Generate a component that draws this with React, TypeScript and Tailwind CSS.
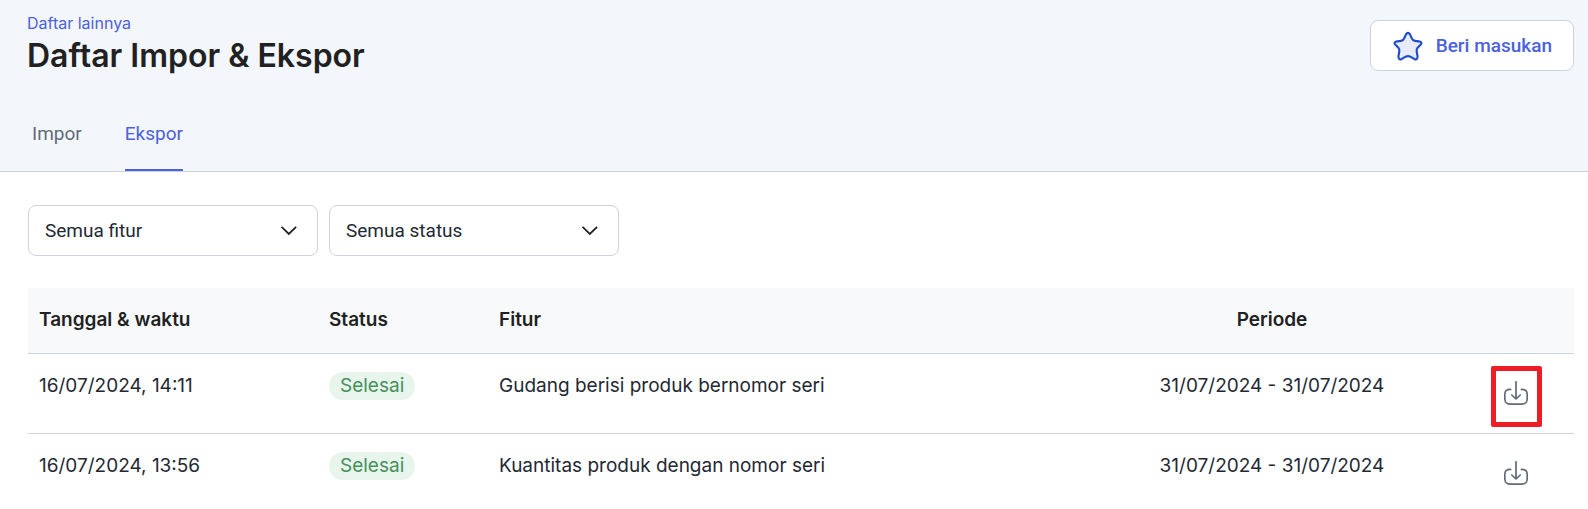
import type { ReactNode } from "react";

interface ExportRow {
  date: string;
  status: string;
  feature: string;
  period: string;
  highlighted?: boolean;
}

const rows: ExportRow[] = [
  {
    date: "16/07/2024, 14:11",
    status: "Selesai",
    feature: "Gudang berisi produk bernomor seri",
    period: "31/07/2024 - 31/07/2024",
    highlighted: true,
  },
  {
    date: "16/07/2024, 13:56",
    status: "Selesai",
    feature: "Kuantitas produk dengan nomor seri",
    period: "31/07/2024 - 31/07/2024",
  },
];

function StarIcon() {
  return (
    <svg className="size-8" viewBox="-.6 -.4 33.2 33.2" fill="#e8ebfa" stroke="#1f4bc6" strokeWidth="2.2" strokeLinejoin="round" aria-hidden>
      <path d="M13.8 4.4Q16 .8 18.2 4.4L20.2 8.6Q21 10.6 23.2 10.9L27.2 11.4Q31.8 12.2 28.8 15.2L26 18Q24.6 19.6 25 21.6L25.9 27Q26.1 31.2 22.4 29.6L18.4 27.3Q16 26.1 13.6 27.3L9.6 29.6Q5.9 31.2 6.1 27L7 21.6Q7.4 19.6 6 18L3.2 15.2Q.2 12.2 4.8 11.4L8.8 10.9Q11 10.6 11.8 8.6Z" />
    </svg>
  );
}

function ChevronIcon() {
  return (
    <svg
      className="pointer-events-none absolute top-1/2 right-[21px] h-4 w-4 -translate-y-1/2"
      viewBox="0 0 16 16"
      fill="none"
      stroke="#212121"
      strokeWidth="1.8"
      aria-hidden
    >
      <path d="M.5 3.8 7.8 11l7.3-7.2" />
    </svg>
  );
}

function DownloadIcon() {
  return (
    <svg
      className="size-6"
      viewBox="0 0 24 24"
      fill="none"
      stroke="#626b79"
      strokeWidth="1.7"
      strokeLinecap="round"
      strokeLinejoin="round"
      aria-hidden
    >
      <path d="M12 .8v17M7.8 14l4.2 4 4.2-4" />
      <path d="M6.6 8.4C2.2 8.4.8 9.8.8 14v3.2C.8 21.8 2.4 23.2 7 23.2h10c4.6 0 6.2-1.4 6.2-6V14c0-4.2-1.4-5.6-5.8-5.6" />
    </svg>
  );
}

function Filter({ id, label, children }: { id: string; label: string; children: ReactNode }) {
  return (
    <div className="relative w-[290px]">
      <select
        id={id}
        aria-label={label}
        className="h-[51px] w-full appearance-none rounded-lg border border-[#cdd2de] bg-white px-4 font-['Roboto',sans-serif] text-[19px] text-[#232933]"
      >
        {children}
      </select>
      <ChevronIcon />
    </div>
  );
}

export default function App() {
  return (
    <div className="bg-white font-['Inter',sans-serif] text-[19px] leading-7 text-[#232933]">
      <header className="border-b border-[#cdd2de] bg-[#f3f6fb] pr-3.5 pl-[27px]">
        <div className="flex items-start justify-between">
          <div className="pt-[11px]">
            <a href="#" className="block text-base leading-6 text-[#4b61dd]">
              Daftar lainnya
            </a>
            <h1 className="text-[32px] leading-[42px] font-semibold text-[#212121]">Daftar Impor &amp; Ekspor</h1>
          </div>
          <button
            type="button"
            className="mt-5 flex h-[51px] items-center gap-3 rounded-lg border border-[#cdd2de] bg-white px-[21px] font-['Roboto',sans-serif] font-medium text-[#4b61dd]"
          >
            <StarIcon />
            Beri masukan
          </button>
        </div>
        <nav className="mt-[43px] flex gap-[43px] pl-[5px] font-['Roboto',sans-serif]">
          <a href="#" className="border-b-2 border-transparent pb-[21px] text-[#626b79]">
            Impor
          </a>
          <a href="#" className="border-b-2 border-[#4b61dd] pb-[21px] text-[#4b61dd]" aria-current="page">
            Ekspor
          </a>
        </nav>
      </header>

      <main className="pt-[33px] pr-3.5 pl-7">
        <div className="flex gap-[11px]">
          <Filter id="feature" label="Fitur">
            <option>Semua fitur</option>
          </Filter>
          <Filter id="status" label="Status">
            <option>Semua status</option>
          </Filter>
        </div>

        <table className="mt-8 w-full table-fixed text-left">
          <colgroup>
            <col className="w-[290px]" />
            <col className="w-[170px]" />
            <col />
            <col className="w-[372px]" />
            <col className="w-[116px]" />
          </colgroup>
          <thead className="bg-[#f8f9fb] text-[#212121]">
            <tr className="h-[65px] border-b border-[#cdd2de]">
              <th className="px-[11px] font-semibold">Tanggal &amp; waktu</th>
              <th className="px-[11px] font-semibold">Status</th>
              <th className="px-[11px] font-semibold">Fitur</th>
              <th className="px-[11px] text-center font-semibold">Periode</th>
              <td />
            </tr>
          </thead>
          <tbody>
            {rows.map((row) => (
              <tr key={row.date} className="h-20 border-b border-[#cdd2de] align-top">
                <td className="px-[11px] pt-[18px]">{row.date}</td>
                <td className="px-[11px] pt-[18px]">
                  <span className="inline-block rounded-full bg-[#e7f5ec] px-[11px] text-[#46915a]">{row.status}</span>
                </td>
                <td className="px-[11px] pt-[18px]">{row.feature}</td>
                <td className="px-[11px] pt-[18px] text-center">{row.period}</td>
                <td className="pt-3">
                  <button
                    type="button"
                    aria-label="Unduh"
                    className={`mx-auto flex h-[61px] w-[51px] items-center justify-center rounded-xs border-5 pb-1.5 ${
                      row.highlighted ? "border-[#ee1c25]" : "border-transparent"
                    }`}
                  >
                    <DownloadIcon />
                  </button>
                </td>
              </tr>
            ))}
          </tbody>
        </table>
      </main>
    </div>
  );
}
